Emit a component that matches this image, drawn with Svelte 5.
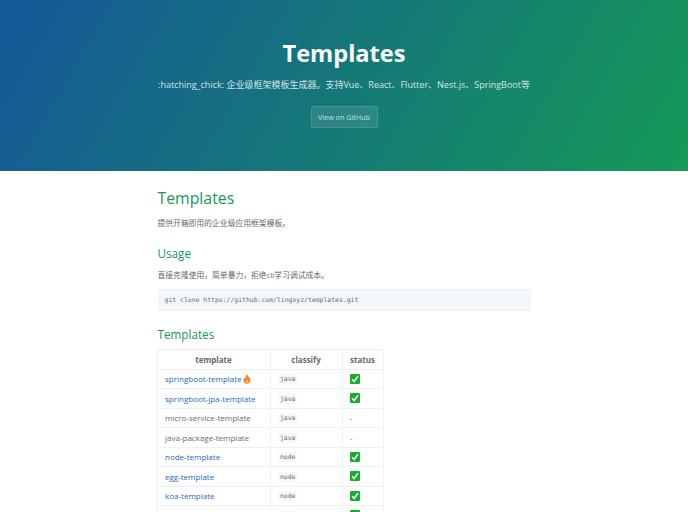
<script>
    const rows = [
        { name: "springboot-template", link: true, fire: true, kind: "java", ok: true },
        { name: "springboot-jpa-template", link: true, kind: "java", ok: true },
        { name: "micro-service-template", kind: "java" },
        { name: "java-package-template", kind: "java" },
        { name: "node-template", link: true, kind: "node", ok: true },
        { name: "egg-template", link: true, kind: "node", ok: true },
        { name: "koa-template", link: true, kind: "node", ok: true },
        { name: "typescript-template", link: true, kind: "node", ok: true }
    ];
</script>

<section class="page-header">
    <h1>Templates</h1>
    <h2>:hatching_chick: 企业级框架模板生成器。支持Vue、React、Flutter、Nest.js、SpringBoot等</h2>
    <a class="btn" href="#top">View on GitHub</a>
</section>

<section class="main-content">
    <h1 class="title">Templates</h1>
    <p>提供开箱即用的企业级应用框架模板。</p>

    <h2 class="sub">Usage</h2>
    <p class="tight">直接克隆使用，简单暴力，拒绝cli学习调试成本。</p>
    <pre>git clone https://github.com/lingxyz/templates.git</pre>

    <h2 class="sub second">Templates</h2>
    <table>
        <thead>
            <tr>
                <th class="c1">template</th>
                <th class="c2">classify</th>
                <th class="c3">status</th>
            </tr>
        </thead>
        <tbody>
            {#each rows as row}
                <tr>
                    <td>
                        {#if row.link}<a href="#top">{row.name}</a>{:else}{row.name}{/if}{#if row.fire}<svg class="fire" viewBox="0 0 12 12" aria-hidden="true">
                                <path fill="#f4812c" d="M6.4 .4c.4 1.8 1.4 2.5 2.4 3.7.9 1.1 1.5 2.2 1.5 3.5C10.300 10 8.400 11.700 6 11.700S1.700 10 1.700 7.600c0-1.400.6-2.600 1.500-3.400.1.800.4 1.300 1 1.700C4 3.800 4.800 1.700 6.400 .4z"/>
                                <path fill="#fbb04a" d="M6.200 6c.2.900 1.900 1.700 1.900 3.300 0 1.300-.9 2.200-2.100 2.200s-2.100-.9-2.100-2.100c0-.7.3-1.300.8-1.700.1.400.3.600.6.800C5.200 7.400 5.500 6.600 6.200 6z"/>
                            </svg>{/if}
                    </td>
                    <td><code>{row.kind}</code></td>
                    <td>
                        {#if row.ok}
                            <svg class="check" viewBox="0 0 12 12" aria-hidden="true">
                                <rect width="12" height="12" rx="1.600" fill="#14ae2c"/>
                                <path d="M2.600 6.200 5 9l4.500-6.300" fill="none" stroke="#fff" stroke-width="1.800"/>
                            </svg>
                        {:else}-{/if}
                    </td>
                </tr>
            {/each}
        </tbody>
    </table>
</section>

<style>
    :global(html), :global(body) {
        margin: 0;
        height: 512px;
        overflow: hidden;
        background: #fff;
    }

    :global(body) {
        font-family: "Open Sans", "Noto Sans CJK SC", sans-serif;
        color: #606c71;
    }

    .page-header {
        box-sizing: border-box;
        height: 171px;
        padding-top: 37px;
        text-align: center;
        color: #fff;
        background-image: linear-gradient(120deg, #155799, #159957);
    }

    .page-header h1 {
        margin: 0;
        font-size: 23.600px;
        line-height: 32px;
        font-weight: 700;
    }

    .page-header h2 {
        margin: 9px 0 0;
        font-size: 9px;
        line-height: 14px;
        font-weight: 400;
        opacity: 0.8;
        white-space: nowrap;
    }

    .btn {
        display: inline-block;
        box-sizing: border-box;
        width: 67px;
        height: 22px;
        margin-top: 14px;
        font-size: 7.200px;
        line-height: 20px;
        color: rgba(255, 255, 255, 0.75);
        text-decoration: none;
        background-color: rgba(255, 255, 255, 0.1);
        border: 1px solid rgba(255, 255, 255, 0.12);
        border-radius: 2px;
    }

    .main-content {
        box-sizing: border-box;
        width: 373px;
        margin: 0 auto;
        padding-top: 16px;
        font-size: 7.800px;
        line-height: 13px;
    }

    .title, .sub {
        margin: 0;
        font-weight: 400;
        color: #159957;
    }

    .title {
        font-size: 15.800px;
        line-height: 22px;
    }

    .main-content p {
        margin: 7.500px 0 0;
    }

    .main-content .tight {
        margin-top: 7px;
    }

    .sub {
        margin-top: 15px;
        font-size: 11.700px;
        line-height: 17px;
    }

    .second {
        margin-top: 14.500px;
    }

    pre {
        margin: 7.500px 0 0;
        box-sizing: border-box;
        height: 22px;
        padding: 0 6px;
        font-family: "DejaVu Sans Mono", monospace;
        font-size: 6.450px;
        line-height: 20px;
        color: #567482;
        background-color: #f3f6fa;
        border: 1px solid #eef1f5;
        border-radius: 2px;
    }

    table {
        margin: 6.500px 0 0 -1px;
        border-collapse: collapse;
        font-size: 8px;
    }

    th, td {
        box-sizing: border-box;
        height: 19.500px;
        padding: 0 7.500px;
        border: 1px solid #eef0f1;
        white-space: nowrap;
    }

    th {
        font-weight: 700;
        text-align: center;
    }

    .c1 {
        width: 113px;
    }

    .c2 {
        width: 72px;
    }

    .c3 {
        width: 40px;
    }

    td a {
        color: #1e6bb8;
        text-decoration: none;
    }

    code {
        padding: 1px 2px;
        font-family: "DejaVu Sans Mono", monospace;
        font-size: 6.400px;
        color: #606c71;
        background-color: #f5f7f9;
        border-radius: 2px;
    }

    .fire {
        width: 10px;
        height: 10px;
        vertical-align: -1.500px;
    }

    .check {
        display: block;
        width: 10px;
        height: 10px;
    }
</style>
